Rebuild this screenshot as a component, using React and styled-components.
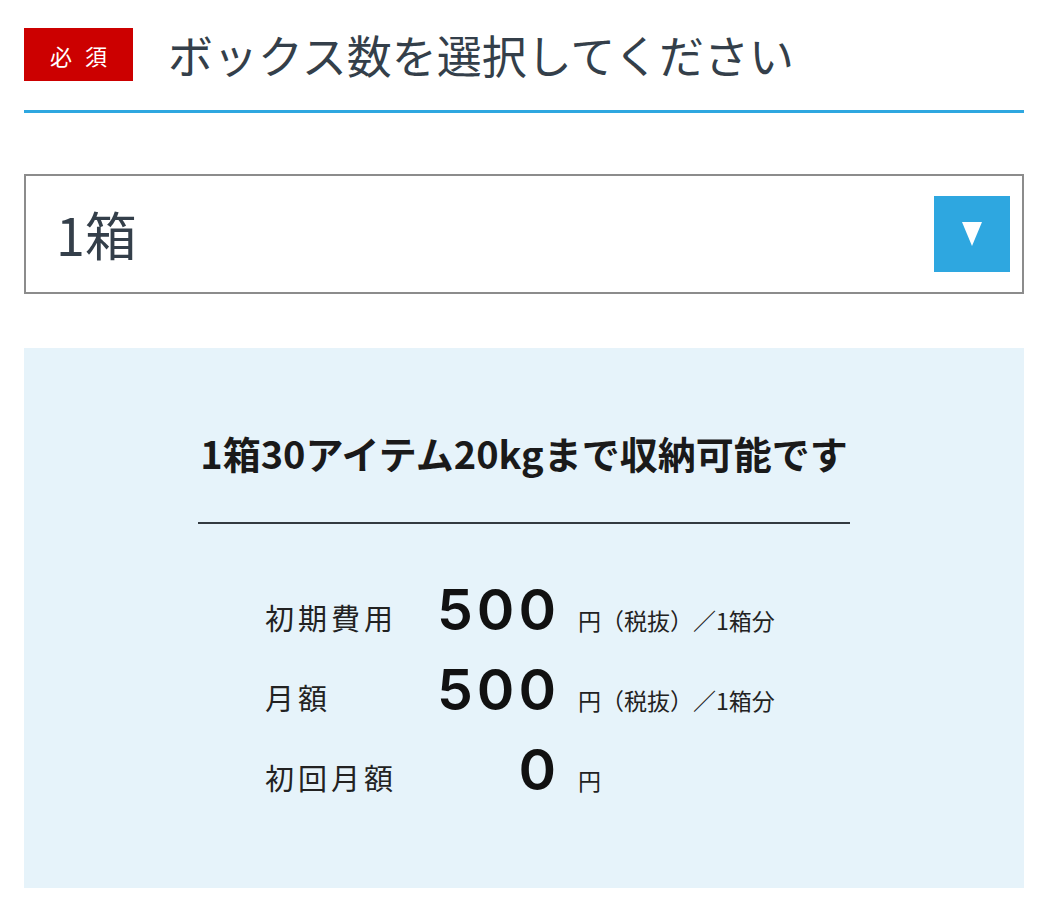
import React from "react";
import styled, { createGlobalStyle } from "styled-components";

const Global = createGlobalStyle`
  html, body { margin: 0; padding: 0; background: #ffffff; }
  body { font-family: "Noto Sans CJK JP", "Noto Sans", sans-serif; }
`;

const Page = styled.div`
  width: 1000px;
  padding: 28px 24px 26px;
`;

const Header = styled.div`
  display: flex;
  align-items: center;
  gap: 35px;
  padding-bottom: 29px;
  border-bottom: 3px solid #2ea7e0;
`;

const Badge = styled.span`
  display: flex;
  align-items: center;
  justify-content: center;
  width: 109px;
  height: 53px;
  background: #cc0000;
  color: #fff;
  font-size: 22px;
  letter-spacing: 13px;
  padding-left: 13px;
  box-sizing: border-box;
`;

const Title = styled.h1`
  margin: 0;
  font-size: 45px;
  font-weight: 400;
  line-height: 1;
  color: #343f4a;
`;

const Select = styled.div`
  margin-top: 61px;
  height: 120px;
  box-sizing: border-box;
  border: 2px solid #8c8c8c;
  display: flex;
  align-items: center;
  justify-content: space-between;
  padding: 0 12px 0 30px;
`;

const SelectValue = styled.span`
  font-size: 52px;
  color: #343f4a;
  line-height: 1;
`;

const ArrowButton = styled.span`
  width: 76px;
  height: 76px;
  background: #2ea7e0;
  display: flex;
  align-items: center;
  justify-content: center;
`;

const Panel = styled.div`
  margin-top: 54px;
  background: #e6f3fa;
  padding: 82px 0 78px;
  display: flex;
  flex-direction: column;
  align-items: center;
`;

const Lead = styled.p`
  margin: 0;
  font-size: 38px;
  font-weight: 700;
  line-height: 46px;
  color: #1a1a1a;
`;

const Divider = styled.hr`
  margin: 46px 0 46px;
  width: 652px;
  height: 2px;
  border: 0;
  background: #333a40;
`;

const Rows = styled.div`
  width: 518px;
  display: flex;
  flex-direction: column;
`;

const Row = styled.div`
  display: flex;
  align-items: baseline;
  height: 80px;
  line-height: 80px;
`;

const Label = styled.span`
  width: 170px;
  font-size: 29px;
  letter-spacing: 4px;
  color: #222;
`;

const Amount = styled.span`
  width: 125px;
  text-align: right;
  font-family: Inter, "Liberation Sans", sans-serif;
  font-weight: 600;
  font-size: 57px;
  letter-spacing: 4px;
  color: #111;
`;

const Unit = styled.span`
  margin-left: 18px;
  font-size: 23px;
  color: #222;
`;

const rows = [
  { label: "初期費用", amount: "500", unit: "円（税抜）／1箱分" },
  { label: "月額", amount: "500", unit: "円（税抜）／1箱分" },
  { label: "初回月額", amount: "0", unit: "円" },
];

export default function App() {
  return (
    <>
      <Global />
      <Page>
        <Header>
          <Badge>必須</Badge>
          <Title>ボックス数を選択してください</Title>
        </Header>
        <Select>
          <SelectValue>1箱</SelectValue>
          <ArrowButton>
            <svg width="20" height="24" viewBox="0 0 20 24">
              <polygon points="0,0 20,0 10,24" fill="#fff" />
            </svg>
          </ArrowButton>
        </Select>
        <Panel>
          <Lead>1箱30アイテム20kgまで収納可能です</Lead>
          <Divider />
          <Rows>
            {rows.map((r) => (
              <Row key={r.label}>
                <Label>{r.label}</Label>
                <Amount>{r.amount}</Amount>
                <Unit>{r.unit}</Unit>
              </Row>
            ))}
          </Rows>
        </Panel>
      </Page>
    </>
  );
}
